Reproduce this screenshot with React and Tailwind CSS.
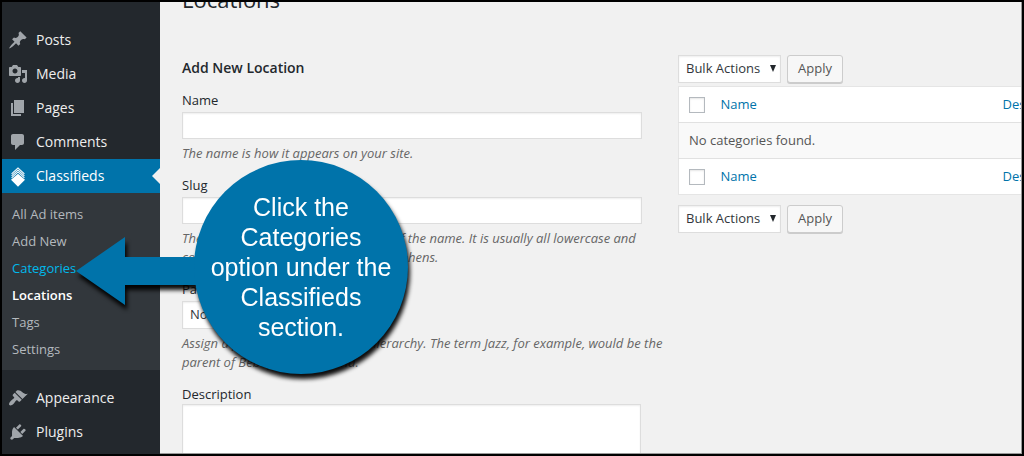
import React from "react";

const icons = {
  posts:
    "M10.44 3.02l1.82-1.82 6.36 6.35-1.83 1.82c-1.05-.68-2.48-.57-3.41.36l-.75.75c-.92.93-1.04 2.35-.35 3.41l-1.83 1.82-2.41-2.41-2.8 2.79c-.42.42-3.38 2.71-3.8 2.29s1.86-3.39 2.28-3.81l2.79-2.79L4.1 9.36l1.83-1.82c1.05.69 2.48.57 3.4-.36l.75-.75c.93-.92 1.05-2.35.36-3.41z",
  media:
    "M13 11V4c0-.55-.45-1-1-1h-1.67L9 1H5L3.67 3H2c-.55 0-1 .45-1 1v7c0 .55.45 1 1 1h10c.55 0 1-.45 1-1zM7 4.5c1.38 0 2.5 1.12 2.5 2.5S8.38 9.5 7 9.5 4.5 8.38 4.5 7 5.62 4.5 7 4.5zM14 6h5v10.5c0 1.38-1.12 2.5-2.5 2.5S14 17.88 14 16.5s1.12-2.5 2.5-2.5c.17 0 .34.02.5.05V9h-3V6zm-4 8.05V13h2v3.5c0 1.38-1.12 2.5-2.5 2.5S7 17.88 7 16.5 8.12 14 9.5 14c.17 0 .34.02.5.05z",
  pages: "M6 15V2h10v13H6zm-1 1h8v2H3V5h2v11z",
  comments:
    "M5 2h9c1.1 0 2 .9 2 2v7c0 1.1-.9 2-2 2h-2l-5 5v-5H5c-1.1 0-2-.9-2-2V4c0-1.1.9-2 2-2z",
  appearance:
    "M14.48 11.06L7.41 3.99l1.5-1.5c.5-.56 2.3-.47 3.51.32 1.21.8 1.43 1.28 2.91 2.1 1.18.64 2.45 1.26 4.45.85zm-.71.71L6.7 4.7 4.93 6.47c-.39.39-.39 1.02 0 1.41l1.06 1.06c.39.39.39 1.03 0 1.42-.6.6-1.43 1.11-2.21 1.69-.35.26-.7.53-1.01.84C1.43 14.23.4 16.08 1.4 17.07c.99 1 2.84-.03 4.18-1.36.31-.31.58-.66.85-1.02.57-.78 1.08-1.61 1.69-2.21.39-.39 1.02-.39 1.41 0l1.06 1.06c.39.39 1.02.39 1.41 0z",
  plugins:
    "M13.11 4.36L9.87 7.6 8 5.73l3.24-3.24c.35-.34 1.05-.2 1.56.32.52.51.66 1.21.31 1.55zm-8 1.77l.91-1.12 9.01 9.01-1.19.84c-.71.71-2.63 1.16-3.82 1.16H6.14L4.9 17.26c-.59.59-1.54.59-2.12 0-.59-.58-.59-1.53 0-2.12l1.24-1.24v-3.88c0-1.13.4-3.19 1.09-3.89zm7.26 3.97l3.24-3.24c.34-.35 1.04-.21 1.55.31.52.51.66 1.21.31 1.55l-3.24 3.25z",
};

function MenuItem({ icon, label }) {
  return (
    <li>
      <a href="#" className="flex h-[34px] items-center gap-2 pl-1.5 text-sm text-[#eeeeee]">
        <svg viewBox="0 0 20 20" className="size-5 fill-[#a0a5aa]" aria-hidden="true">
          <path d={icons[icon]} />
        </svg>
        {label}
      </a>
    </li>
  );
}

function ClassifiedsIcon() {
  return (
    <svg viewBox="0 0 20 20" className="size-5 overflow-visible" aria-hidden="true">
      <path d="M10 7.8L17 13.8L10 20.8L3 13.8Z" fill="#fff" />
      <g fill="none" stroke="#fff" strokeWidth="1.1">
        <path d="M3.6 11.9L10 5.9L16.4 11.9" />
        <path d="M3.6 9.9L10 3.9L16.4 9.9" />
        <path d="M3.6 7.9L10 1.9L16.4 7.9" />
      </g>
    </svg>
  );
}

const subItems = ["All Ad items", "Add New", "Categories", "Locations", "Tags", "Settings"];

function subClass(name) {
  if (name === "Categories") return "text-[#00b9eb]";
  if (name === "Locations") return "font-semibold text-white";
  return "text-[#b4b9be]";
}

function Sidebar() {
  return (
    <nav aria-label="Admin menu" className="w-[158px] shrink-0 bg-[#23282d] pt-[21px]">
      <ul>
        <MenuItem icon="posts" label="Posts" />
        <MenuItem icon="media" label="Media" />
        <MenuItem icon="pages" label="Pages" />
        <MenuItem icon="comments" label="Comments" />
        <li>
          <a
            href="#"
            className="flex h-[34px] items-center gap-2 bg-[#0073aa] pl-1.5 text-sm text-white"
          >
            <ClassifiedsIcon />
            Classifieds
            <svg viewBox="0 0 8 16" className="ml-auto h-4 w-2 fill-[#f1f1f1]" aria-hidden="true">
              <path d="M8 0V16L0 8Z" />
            </svg>
          </a>
          <ul className="bg-[#32373c] pt-2 pb-[7px]">
            {subItems.map((name) => (
              <li key={name}>
                <a
                  href="#"
                  className={`flex h-[27px] items-center pl-[10px] text-[13px] ${subClass(name)}`}
                >
                  {name}
                </a>
              </li>
            ))}
          </ul>
        </li>
      </ul>
      <ul className="mt-[11px]">
        <MenuItem icon="appearance" label="Appearance" />
        <MenuItem icon="plugins" label="Plugins" />
      </ul>
    </nav>
  );
}

const box = "border border-[#dddddd] bg-white shadow-[inset_0_1px_2px_rgba(0,0,0,0.07)]";

function Select({ id, label, option }) {
  return (
    <span className="relative inline-flex">
      <select
        id={id}
        aria-label={label}
        className={`h-7 appearance-none pr-[19px] pl-[7px] text-[13px] text-[#32373c] ${box}`}
      >
        <option>{option}</option>
      </select>
      <svg
        viewBox="0 0 6 7"
        className="pointer-events-none absolute top-[10px] right-[5px] h-[7px] w-1.5 fill-[#23282d]"
        aria-hidden="true"
      >
        <path d="M0 0H6L3 7Z" />
      </svg>
    </span>
  );
}

function Help({ children }) {
  return <p className="mt-[5px] text-[13px] leading-[19px] text-[#666666] italic">{children}</p>;
}

const labelClass = "block text-[13px] leading-5 text-[#23282d]";

function LocationForm() {
  return (
    <form className="w-[486px] shrink-0">
      <h2 className="mb-px text-sm leading-5 font-semibold text-[#23282d]">Add New Location</h2>
      <div className="mt-3">
        <label htmlFor="name" className={labelClass}>Name</label>
        <input id="name" type="text" className={`mt-0.5 block h-[27px] w-[460px] ${box}`} />
        <Help>The name is how it appears on your site.</Help>
      </div>
      <div className="mt-3">
        <label htmlFor="slug" className={labelClass}>Slug</label>
        <input id="slug" type="text" className={`mt-0.5 block h-[27px] w-[460px] ${box}`} />
        <Help>
          The “slug” is the URL-friendly version of the name. It is usually all lowercase and
          contains only letters, numbers, and hyphens.
        </Help>
      </div>
      <div className="mt-3">
        <label htmlFor="parent" className={labelClass}>Parent</label>
        <div className="mt-0.5 flex">
          <Select id="parent" option="None" />
        </div>
        <Help>
          Assign a parent term to create a hierarchy. The term Jazz, for example, would be the
          parent of Bebop and Big Band.
        </Help>
      </div>
      <div className="mt-3">
        <label htmlFor="description" className={labelClass}>Description</label>
        <textarea id="description" rows="5" className={`block w-[459px] resize-none ${box}`} />
      </div>
    </form>
  );
}

function BulkActions({ id }) {
  return (
    <div className="flex items-center gap-1.5">
      <Select id={id} label="Bulk Actions" option="Bulk Actions" />
      <button
        type="button"
        className="h-7 rounded-[3px] border border-[#cccccc] bg-[#f7f7f7] px-2.5 text-[13px] text-[#555555] shadow-[0_1px_0_#cccccc]"
      >
        Apply
      </button>
    </div>
  );
}

function HeaderRow({ name }) {
  return (
    <tr className="h-9 bg-white">
      <th className="w-[42px] pl-[10px] text-left">
        <input
          type="checkbox"
          aria-label={name}
          className="block size-4 appearance-none border border-[#b4b9be] bg-white shadow-[inset_0_1px_2px_rgba(0,0,0,0.1)]"
        />
      </th>
      <th className="w-[282px] text-left font-normal">
        <a href="#" className="text-[#0073aa]">Name</a>
      </th>
      <th className="text-left font-normal">
        <a href="#" className="text-[#0073aa]">Description</a>
      </th>
    </tr>
  );
}

function LocationList() {
  return (
    <section className="min-w-[480px] flex-1">
      <BulkActions id="bulk-top" />
      <table className="mt-[3px] mb-[10px] w-full table-fixed border border-[#e5e5e5] text-[13px] text-[#555555]">
        <thead>
          <HeaderRow name="Select all, top" />
        </thead>
        <tbody>
          <tr className="h-9 border-y border-[#e1e1e1] bg-[#f9f9f9]">
            <td colSpan="3" className="pl-[10px]">No categories found.</td>
          </tr>
        </tbody>
        <tfoot>
          <HeaderRow name="Select all, bottom" />
        </tfoot>
      </table>
      <BulkActions id="bulk-bottom" />
    </section>
  );
}

function Callout() {
  return (
    <aside className="absolute top-[158px] left-[74px] flex drop-shadow-[2px_5px_2px_rgba(0,0,0,0.95)]">
      <svg viewBox="0 0 124 68" className="mt-[77px] -mr-1.5 h-[68px] w-[124px] fill-[#0073aa]" aria-hidden="true">
        <path d="M0 34L49 0V20H124V48H49V68Z" />
      </svg>
      <p className="flex size-[214px] items-center justify-center rounded-full bg-[#0073aa] text-center font-['Liberation_Sans',Arial,sans-serif] text-[25px] leading-[30px] text-white">
        Click the
        <br />
        Categories
        <br />
        option under the
        <br />
        Classifieds
        <br />
        section.
      </p>
    </aside>
  );
}

export default function App() {
  return (
    <div className="relative flex h-screen overflow-hidden border-2 border-black bg-[#f1f1f1] font-['Open_Sans','Noto_Sans',sans-serif]">
      <Sidebar />
      <main className="min-w-0 flex-1 overflow-hidden border-r border-b border-[#999999] pl-[22px]">
        <h1 className="-mt-[17px] text-[22px] leading-7 text-[#23282d]">Locations</h1>
        <div className="mt-[42px] flex gap-[10px]">
          <div className="pt-[3px]">
            <LocationForm />
          </div>
          <LocationList />
        </div>
      </main>
      <Callout />
    </div>
  );
}
